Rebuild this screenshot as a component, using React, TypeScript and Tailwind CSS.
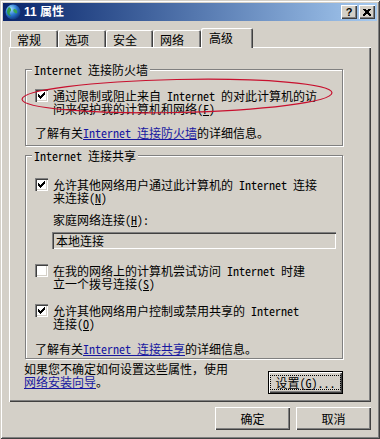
import React from "react";

const FONT = "font-['Noto_Sans_Mono_CJK_SC','Noto_Sans_CJK_SC',sans-serif]";

function CheckMark() {
  const px: [number, number][] = [
    [6, 0],
    [5, 1], [6, 1],
    [0, 2], [4, 2], [5, 2], [6, 2],
    [0, 3], [1, 3], [3, 3], [4, 3], [5, 3],
    [0, 4], [1, 4], [2, 4], [3, 4], [4, 4],
    [1, 5], [2, 5], [3, 5],
    [2, 6],
  ];
  return (
    <svg width="7" height="7" viewBox="0 0 7 7" shapeRendering="crispEdges">
      {px.map(([x, y], i) => (
        <rect key={i} x={x} y={y} width="1" height="1" fill="#000" />
      ))}
    </svg>
  );
}

function Box({ checked }: { checked: boolean }) {
  return (
    <div className="w-[13px] h-[13px] shrink-0 bg-white flex items-center justify-center shadow-[inset_1px_1px_0_#808080,inset_2px_2px_0_#404040,inset_-1px_-1px_0_#fff,inset_-2px_-2px_0_#d4d0c8]">
      {checked && <CheckMark />}
    </div>
  );
}

function U({ c }: { c: string }) {
  return <span className="underline underline-offset-[1px]">{c}</span>;
}

function CheckRow({ checked, children }: { checked: boolean; children: React.ReactNode }) {
  return (
    <div className="flex items-start">
      <div className="pt-0">
        <Box checked={checked} />
      </div>
      <div className="ml-[5px] leading-[13px]">{children}</div>
    </div>
  );
}

function Group({
  label,
  height,
  children,
}: {
  label: string;
  height: number;
  children: React.ReactNode;
}) {
  return (
    <div
      className="relative w-[318px] border border-[#808080] shadow-[inset_1px_1px_0_#fff,1px_1px_0_#fff]"
      style={{ height }}
    >
      <div className="absolute left-[6px] top-[-7px] px-[2px] bg-[#d4d0c8] leading-[13px]">{label}</div>
      {children}
    </div>
  );
}

function Btn({
  children,
  w,
  def,
}: {
  children: React.ReactNode;
  w: number;
  def?: boolean;
}) {
  return (
    <div
      className={
        "h-[23px] flex items-center justify-center bg-[#d4d0c8] " +
        (def
          ? "border border-black shadow-[inset_1px_1px_0_#fff,inset_-1px_-1px_0_#404040,inset_-2px_-2px_0_#808080]"
          : "shadow-[inset_1px_1px_0_#fff,inset_-1px_-1px_0_#404040,inset_-2px_-2px_0_#808080]")
      }
      style={{ width: w }}
    >
      {def ? (
        <div className="border border-dotted border-black px-[4px] leading-[13px] h-[15px] flex items-center">
          {children}
        </div>
      ) : (
        <span className="leading-[13px]">{children}</span>
      )}
    </div>
  );
}

function Tab({ label, w, selected }: { label: string; w: number; selected?: boolean }) {
  if (selected) {
    return (
      <div
        className="relative z-10 h-[20px] mb-[-1px] bg-[#d4d0c8] rounded-tl-[2px] rounded-tr-[2px] shadow-[inset_1px_1px_0_#fff,inset_-1px_0_0_#404040,inset_-2px_0_0_#808080] pl-[8px] pt-[3px] leading-[13px]"
        style={{ width: w }}
      >
        {label}
      </div>
    );
  }
  return (
    <div
      className="h-[17px] bg-[#d4d0c8] rounded-tl-[2px] rounded-tr-[2px] shadow-[inset_1px_1px_0_#fff,inset_-1px_0_0_#404040,inset_-2px_0_0_#808080] pl-[7px] pt-[3px] leading-[13px]"
      style={{ width: w }}
    >
      {label}
    </div>
  );
}

function Globe() {
  return (
    <svg width="16" height="16" viewBox="0 0 16 16">
      <defs>
        <radialGradient id="g" cx="0.35" cy="0.3" r="0.8">
          <stop offset="0" stopColor="#9fe0ff" />
          <stop offset="0.5" stopColor="#2a78d0" />
          <stop offset="1" stopColor="#0a2a70" />
        </radialGradient>
      </defs>
      <circle cx="8" cy="8" r="7.5" fill="url(#g)" />
      <path d="M4 3 C6 4 7 6 5 8 C4 9 5 11 6 12 C4 12 2 10 2 8 C2 6 3 4 4 3Z" fill="#2f9a3a" opacity="0.9" />
      <path d="M9 5 C11 5 13 7 12 9 C11 10 10 9 9 8 C8 7 8 6 9 5Z" fill="#39a844" opacity="0.9" />
    </svg>
  );
}

export default function App() {
  return (
    <div
      className={
        "relative w-[380px] h-[439px] bg-[#d4d0c8] text-[12px] text-black p-[3px] flex flex-col shadow-[inset_1px_1px_0_#d4d0c8,inset_-1px_-1px_0_#404040,inset_2px_2px_0_#fff,inset_-2px_-2px_0_#808080] " +
        FONT
      }
    >
      {/* Title bar */}
      <div className="h-[18px] bg-gradient-to-r from-[#0a246a] to-[#a6caf0] flex items-center pl-[2px] pr-[2px]">
        <Globe />
        <div className="ml-[3px] text-white font-bold text-[12px] leading-[14px] font-['Liberation_Sans','Noto_Sans_CJK_SC',sans-serif]">
          11 属性
        </div>
        <div className="ml-auto flex gap-[2px]">
          <div className="w-[16px] h-[14px] bg-[#d4d0c8] flex items-center justify-center font-bold text-[11px] leading-[11px] font-['Liberation_Sans',sans-serif] shadow-[inset_1px_1px_0_#fff,inset_-1px_-1px_0_#404040,inset_-2px_-2px_0_#808080]">
            ?
          </div>
          <div className="w-[16px] h-[14px] bg-[#d4d0c8] flex items-center justify-center shadow-[inset_1px_1px_0_#fff,inset_-1px_-1px_0_#404040,inset_-2px_-2px_0_#808080]">
            <svg width="8" height="7" viewBox="0 0 8 7" shapeRendering="crispEdges">
              <path d="M0.5 0 L7.5 7 M1.5 0 L8.5 7 M7.5 0 L0.5 7 M6.5 0 L-0.5 7" stroke="#000" strokeWidth="1" />
            </svg>
          </div>
        </div>
      </div>

      {/* Tabs */}
      <div className="mt-[7px] ml-[7px] flex items-end h-[19px]">
        <Tab label="常规" w={48} />
        <Tab label="选项" w={48} />
        <Tab label="安全" w={47} />
        <Tab label="网络" w={48} />
        <Tab label="高级" w={52} selected />
      </div>

      {/* Panel */}
      <div className="ml-[6px] w-[362px] h-[355px] shadow-[inset_1px_1px_0_#fff,inset_-1px_-1px_0_#404040,inset_-2px_-2px_0_#808080] pl-[16px] pt-[22px]">
        <Group label="Internet 连接防火墙" height={77}>
          <div className="pl-[9px] pt-[19px]">
            <CheckRow checked>
              通过限制或阻止来自 Internet 的对此计算机的访
              <br />
              问来保护我的计算机和网络(<U c="F" />)
            </CheckRow>
            <div className="mt-[11px] leading-[13px]">
              了解有关
              <span className="text-[#1818a0] underline underline-offset-[1px]">Internet 连接防火墙</span>
              的详细信息。
            </div>
          </div>
        </Group>

        <div className="mt-[9px]">
          <Group label="Internet 连接共享" height={204}>
            <div className="pl-[9px] pt-[22px]">
              <CheckRow checked>
                允许其他网络用户通过此计算机的 Internet 连接
                <br />
                来连接(<U c="N" />)
              </CheckRow>
              <div className="ml-[18px] mt-[9px] leading-[13px]">
                家庭网络连接(<U c="H" />):
              </div>
              <div className="ml-[17px] mt-[6px] w-[284px] h-[17px] bg-[#d4d0c8] shadow-[inset_1px_1px_0_#808080,inset_2px_2px_0_#404040,inset_-1px_-1px_0_#fff] pl-[4px] flex items-center leading-[13px]">
                本地连接
              </div>
              <div className="mt-[15px]">
                <CheckRow checked={false}>
                  在我的网络上的计算机尝试访问 Internet 时建
                  <br />
                  立一个拨号连接(<U c="S" />)
                </CheckRow>
              </div>
              <div className="mt-[14px]">
                <CheckRow checked>
                  允许其他网络用户控制或禁用共享的 Internet
                  <br />
                  连接(<U c="O" />)
                </CheckRow>
              </div>
              <div className="mt-[12px] leading-[13px]">
                了解有关
                <span className="text-[#1818a0] underline underline-offset-[1px]">Internet 连接共享</span>
                的详细信息。
              </div>
            </div>
          </Group>
        </div>

        <div className="mt-[2px] -ml-[1px] flex w-[319px]">
          <div className="leading-[13px] mt-[1px]">
            如果您不确定如何设置这些属性，使用
            <br />
            <span className="text-[#1818a0] underline underline-offset-[1px]">网络安装向导</span>。
          </div>
          <div className="ml-auto mt-[10px]">
            <Btn w={75} def>
              设置(<U c="G" />)...
            </Btn>
          </div>
        </div>
      </div>

      {/* Bottom buttons */}
      <div className="mt-[5px] ml-[212px] flex gap-[6px]">
        <Btn w={75}>确定</Btn>
        <Btn w={75}>取消</Btn>
      </div>

      {/* Red hand-drawn ellipse annotation */}
      <svg className="absolute left-0 top-0 pointer-events-none" width="380" height="439">
        <ellipse cx="177" cy="96" rx="155" ry="16.5" fill="none" stroke="#c8102e" strokeWidth="1.2" transform="rotate(-1.2 177 96)" />
      </svg>
    </div>
  );
}
